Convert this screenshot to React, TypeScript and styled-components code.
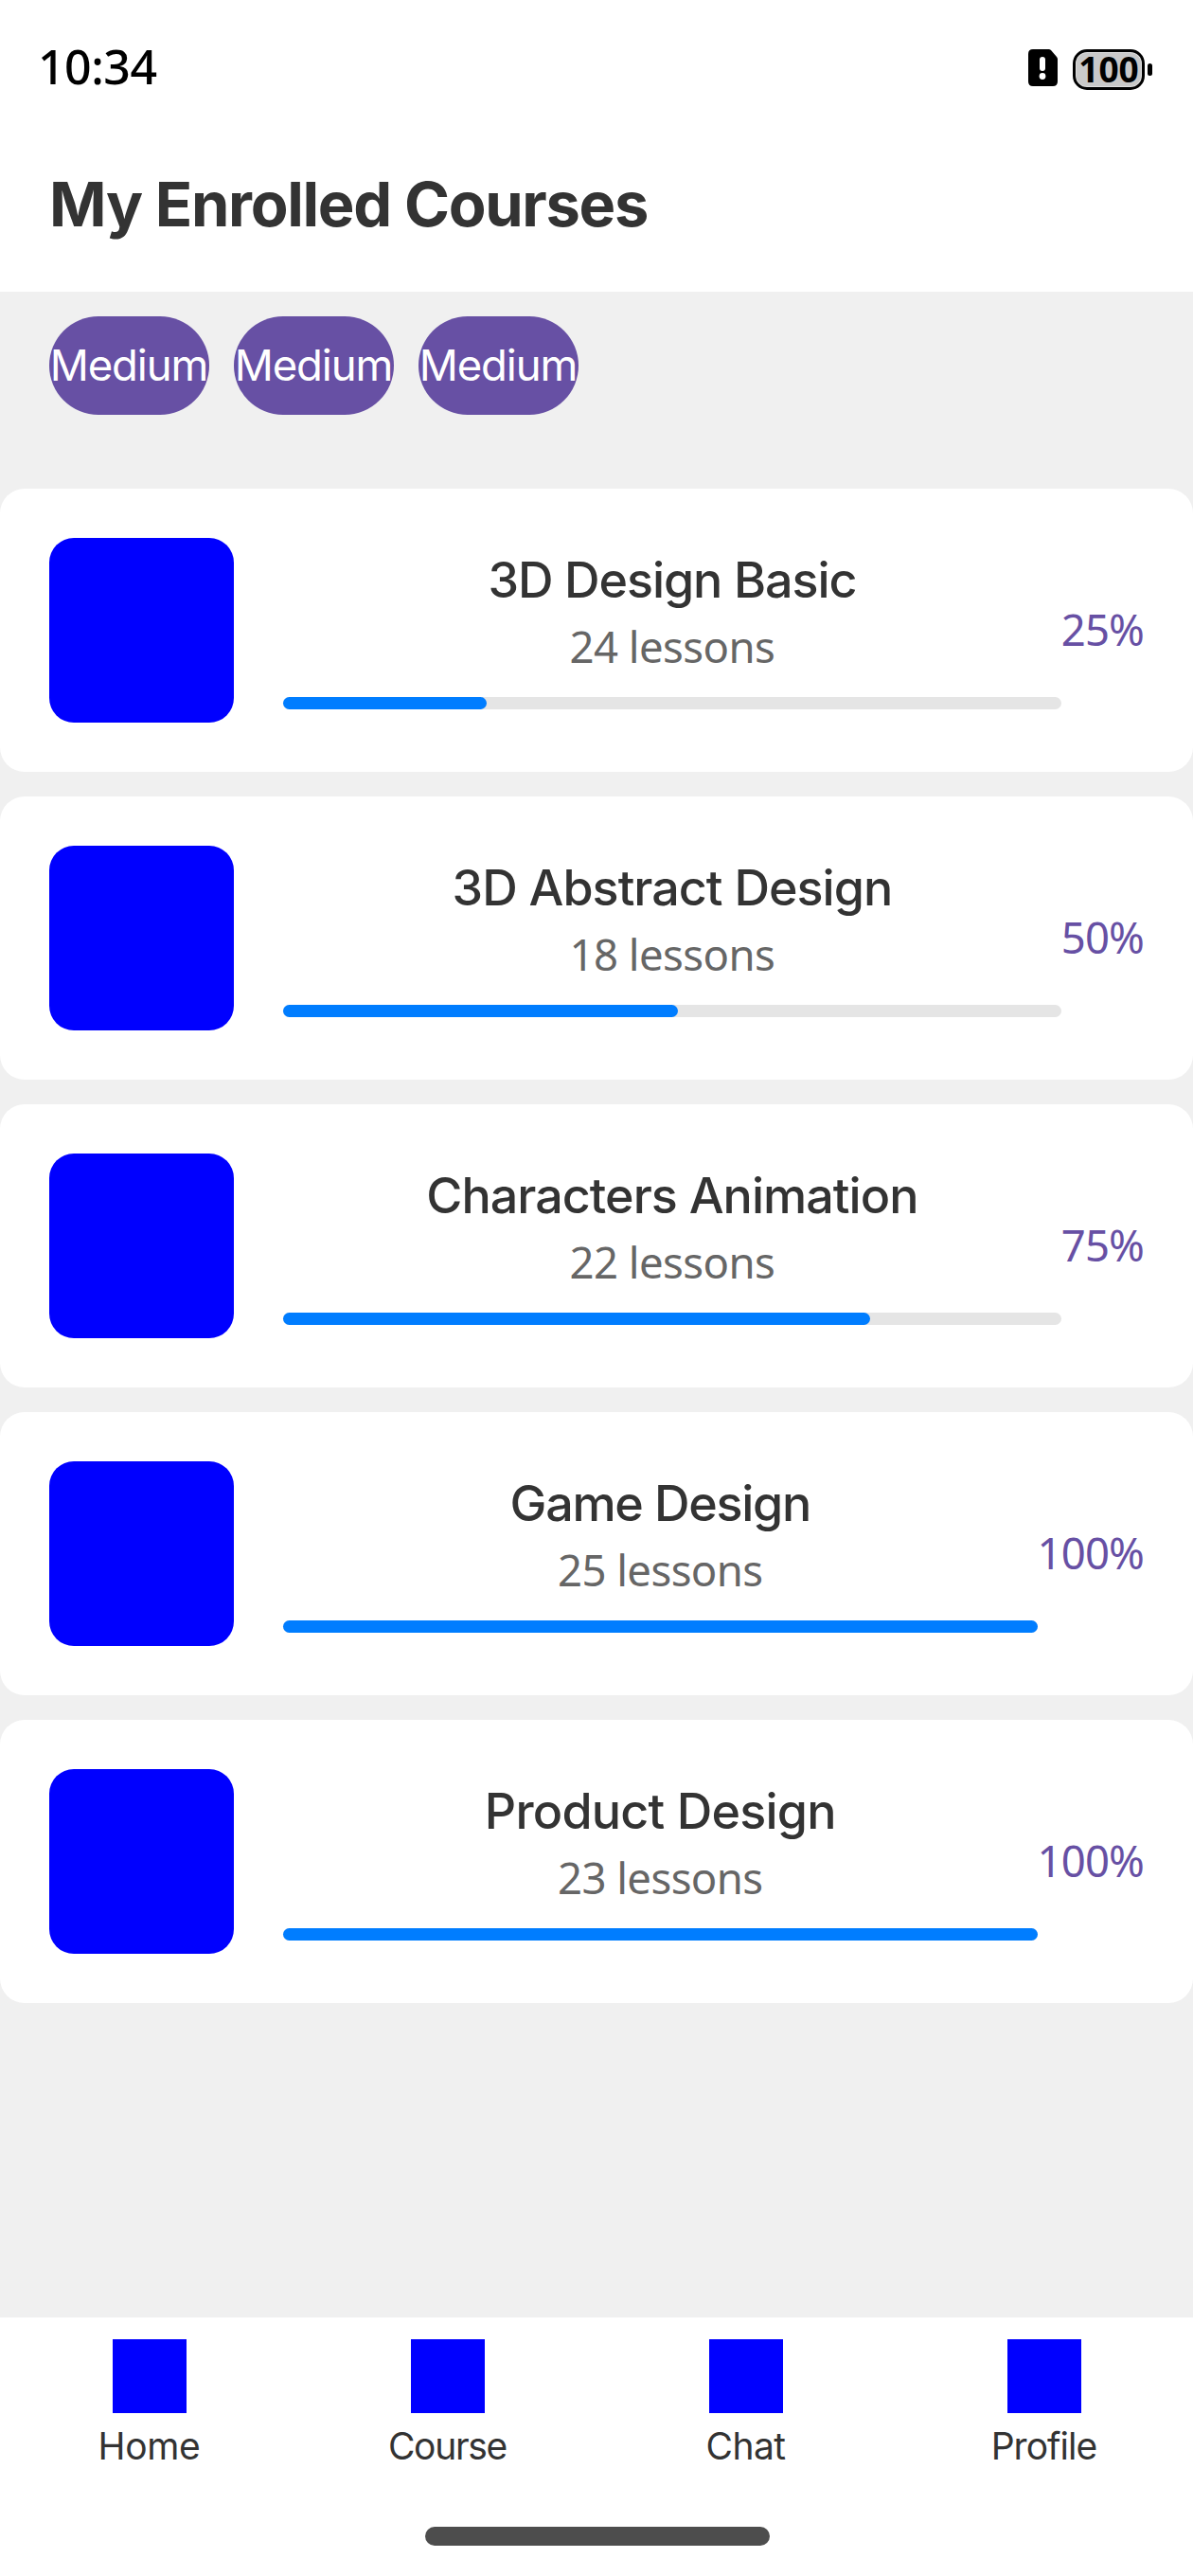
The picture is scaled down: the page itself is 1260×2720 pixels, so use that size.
import React from 'react';
import styled, { createGlobalStyle } from 'styled-components';

const GlobalStyle = createGlobalStyle`
  *, *::before, *::after { box-sizing: border-box; }
  body { margin: 0; background: #fff; }
`;

const uiFont = "Inter, 'Noto Sans', sans-serif";
const numericFont = "'Noto Sans', 'Open Sans', sans-serif";

const Screen = styled.div`
  display: flex;
  flex-direction: column;
  width: 1260px;
  height: 2720px;
  overflow: hidden;
  background: #fff;
  font-family: ${uiFont};
  color: #333;
`;

const StatusBar = styled.header`
  display: flex;
  align-items: center;
  justify-content: space-between;
  flex: none;
  height: 122px;
  padding: 24px 43px 0 40px;
`;

const Clock = styled.time`
  margin-bottom: 6px;
  font: 500 50px/60px ${numericFont};
  letter-spacing: -0.5px;
  color: #000;
`;

const StatusIcons = styled.div`
  display: flex;
  align-items: center;
`;

const SimIcon = styled.svg`
  width: 31px;
  height: 39px;
  margin: 0 16px 3px 0;
`;

const BatteryBody = styled.div`
  display: flex;
  align-items: center;
  justify-content: center;
  width: 76px;
  height: 43px;
  border: 3px solid #000;
  border-radius: 15px;
  background: #c9c9c9;
  box-shadow: inset 0 0 0 1px #dedede;
  font: 700 37px/37px ${numericFont};
  color: #000;
  padding-bottom: 2px;
`;

const BatteryTip = styled.div`
  width: 5px;
  height: 13px;
  margin-left: 3px;
  border-radius: 2.5px;
  background: #000;
`;

const TitleBar = styled.div`
  display: flex;
  align-items: center;
  flex: none;
  height: 186px;
  padding: 2px 52px 0;
`;

const PageTitle = styled.h1`
  margin: 0;
  font-size: 65px;
  font-weight: 700;
  line-height: 78px;
  letter-spacing: -1.32px;
`;

const Content = styled.main`
  flex: none;
  height: 2139px;
  padding-top: 26px;
  background: #f0f0f0;
`;

const ChipRow = styled.div`
  display: flex;
  gap: 26px;
  padding: 0 52px;
  margin-bottom: 78px;
`;

const Chip = styled.button`
  display: flex;
  align-items: center;
  justify-content: center;
  width: 169px;
  height: 104px;
  padding: 0 1px 0 0;
  border: 0;
  border-radius: 52px;
  background: #6750a4;
  color: #fff;
  font: 400 45.5px/56px ${uiFont};
  letter-spacing: -1.1px;
`;

const CourseList = styled.div`
  display: flex;
  flex-direction: column;
  gap: 26px;
`;

const Card = styled.article`
  display: flex;
  align-items: center;
  height: 299px;
  padding: 0 52px;
  border-radius: 26px;
  background: #fff;
`;

const Thumbnail = styled.div`
  flex: none;
  width: 195px;
  height: 195px;
  margin-right: 52px;
  border-radius: 26px;
  background: #00f;
`;

const CourseInfo = styled.div`
  display: flex;
  flex: 1;
  flex-direction: column;
  align-items: center;
`;

const CourseName = styled.h2<{ $tracking: number }>`
  margin: 0 0 13px;
  font-size: 52px;
  font-weight: 500;
  line-height: 61px;
  letter-spacing: ${(p) => p.$tracking}px;
`;

const Lessons = styled.p`
  margin: 0 0 27px;
  font: 400 45.5px/53px ${numericFont};
  letter-spacing: -0.58px;
  color: #666;
`;

const Track = styled.div`
  width: 100%;
  height: 13px;
  border-radius: 6.5px;
  background: #e5e5e5;
`;

/* The fill keeps its round cap, so it grows from 13px to the full track. */
const Fill = styled.div`
  height: 100%;
  border-radius: 6.5px;
  background: #007dff;
`;

const Percent = styled.span`
  padding-bottom: 2px;
  font: 400 45.5px/53px ${numericFont};
  letter-spacing: -0.88px;
  color: #6750a4;
`;

const TabBar = styled.nav`
  display: flex;
  flex: none;
  padding-top: 23px;
`;

const Tab = styled.a<{ $tracking: number }>`
  display: flex;
  flex: 1;
  flex-direction: column;
  align-items: center;
  gap: 12px;
  font-size: 39px;
  line-height: 46px;
  letter-spacing: ${(p) => p.$tracking}px;
`;

const TabIcon = styled.div`
  width: 78px;
  height: 78px;
  background: #00f;
`;

const HomeIndicator = styled.div`
  width: 364px;
  height: 20px;
  margin: 62px 447px 0 449px;
  border-radius: 10px;
  background: #4d4d4d;
`;

const chips = ['Medium', 'Medium', 'Medium'];

const courses = [
  { name: '3D Design Basic', lessons: 24, progress: 25, tracking: -1.09 },
  { name: '3D Abstract Design', lessons: 18, progress: 50, tracking: -0.98 },
  { name: 'Characters Animation', lessons: 22, progress: 75, tracking: -0.97 },
  { name: 'Game Design', lessons: 25, progress: 100, tracking: -1.3 },
  { name: 'Product Design', lessons: 23, progress: 100, tracking: -0.75 },
];

const tabs = [
  { label: 'Home', tracking: -0.3 },
  { label: 'Course', tracking: -1.3 },
  { label: 'Chat', tracking: -0.5 },
  { label: 'Profile', tracking: -0.95 },
];

export default function App() {
  return (
    <Screen>
      <GlobalStyle />
      <StatusBar>
        <Clock>10:34</Clock>
        <StatusIcons>
          <SimIcon viewBox="0 0 31 39">
            <path
              d="M5 0H21.5Q23 0 24 1L30 8Q31 9 31 10.500V34Q31 39 26 39H5Q0 39 0 34V5Q0 0 5 0Z"
              fill="#000"
            />
            <rect x="12" y="8" width="6" height="15" rx="3" fill="#fff" />
            <circle cx="15" cy="28.500" r="3.400" fill="#fff" />
          </SimIcon>
          <BatteryBody>100</BatteryBody>
          <BatteryTip />
        </StatusIcons>
      </StatusBar>
      <TitleBar>
        <PageTitle>My Enrolled Courses</PageTitle>
      </TitleBar>
      <Content>
        <ChipRow>
          {chips.map((label, i) => (
            <Chip key={i}>{label}</Chip>
          ))}
        </ChipRow>
        <CourseList>
          {courses.map((c) => (
            <Card key={c.name}>
              <Thumbnail />
              <CourseInfo>
                <CourseName $tracking={c.tracking}>{c.name}</CourseName>
                <Lessons>{c.lessons} lessons</Lessons>
                <Track>
                  <Fill style={{ width: `calc(13px + (100% - 13px) * ${c.progress / 100})` }} />
                </Track>
              </CourseInfo>
              <Percent>{c.progress}%</Percent>
            </Card>
          ))}
        </CourseList>
      </Content>
      <TabBar>
        {tabs.map((t) => (
          <Tab key={t.label} $tracking={t.tracking}>
            <TabIcon />
            {t.label}
          </Tab>
        ))}
      </TabBar>
      <HomeIndicator />
    </Screen>
  );
}
